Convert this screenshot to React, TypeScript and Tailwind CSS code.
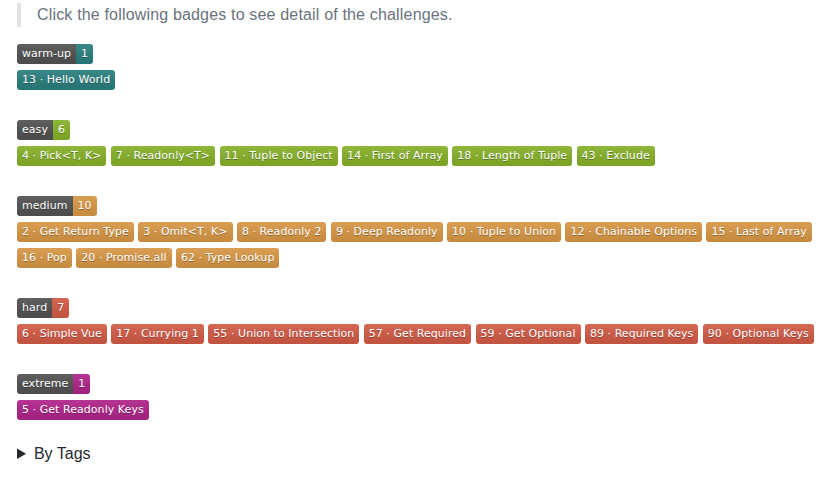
import React from 'react';

type Group = {
  label: string;
  color: string;
  items: string[];
};

const groups: Group[] = [
  { label: 'warm-up', color: 'bg-[#2b8282]', items: ['13 · Hello World'] },
  {
    label: 'easy',
    color: 'bg-[#8ab62a]',
    items: [
      '4 · Pick<T, K>',
      '7 · Readonly<T>',
      '11 · Tuple to Object',
      '14 · First of Array',
      '18 · Length of Tuple',
      '43 · Exclude',
    ],
  },
  {
    label: 'medium',
    color: 'bg-[#de9c48]',
    items: [
      '2 · Get Return Type',
      '3 · Omit<T, K>',
      '8 · Readonly 2',
      '9 · Deep Readonly',
      '10 · Tuple to Union',
      '12 · Chainable Options',
      '15 · Last of Array',
      '16 · Pop',
      '20 · Promise.all',
      '62 · Type Lookup',
    ],
  },
  {
    label: 'hard',
    color: 'bg-[#d85e49]',
    items: [
      '6 · Simple Vue',
      '17 · Currying 1',
      '55 · Union to Intersection',
      '57 · Get Required',
      '59 · Get Optional',
      '89 · Required Keys',
      '90 · Optional Keys',
    ],
  },
  { label: 'extreme', color: 'bg-[#b5268f]', items: ['5 · Get Readonly Keys'] },
];

const shade =
  'bg-linear-to-b from-[rgba(187,187,187,0.1)] to-[rgba(0,0,0,0.1)]';
const badgeText =
  "h-5 px-[5px] text-[11px] leading-5 tracking-[0.05px] text-white whitespace-nowrap font-['DejaVu_Sans',Verdana,sans-serif] [text-shadow:0_1px_0_rgba(1,1,1,0.3)]";

const Badge: React.FC<{ text: string; color: string }> = ({ text, color }) => (
  <a className={`${badgeText} ${color} ${shade} rounded-[3px] cursor-pointer`}>{text}</a>
);

const CountBadge: React.FC<{ label: string; count: number; color: string }> = ({
  label,
  count,
  color,
}) => (
  <div className="flex rounded-[3px] overflow-hidden w-max">
    <span className={`${badgeText} bg-[#555555] ${shade}`}>{label}</span>
    <span className={`${badgeText} ${color} ${shade}`}>{count}</span>
  </div>
);

export default function App() {
  return (
    <div className="min-h-screen bg-white pl-[17px] pt-[3px] font-['Liberation_Sans',Arial,sans-serif] text-[#24292e]">
      <blockquote className="border-l-4 border-[#dfe2e5] pl-4 text-[16px] leading-6 tracking-[0.17px] text-[#6a737d]">
        Click the following badges to see detail of the challenges.
      </blockquote>

      <div className="mt-[17px] flex flex-col gap-[30px]">
        {groups.map((g) => (
          <div key={g.label} className="flex flex-col gap-[6px]">
            <CountBadge label={g.label} count={g.items.length} color={g.color} />
            <div className="flex flex-wrap gap-x-[4.4px] gap-y-[6px]">
              {g.items.map((item) => (
                <Badge key={item} text={item} color={g.color} />
              ))}
            </div>
          </div>
        ))}
      </div>

      <details className="mt-[22px] text-[16px] leading-6">
        <summary className="cursor-pointer">By Tags</summary>
      </details>
    </div>
  );
}
